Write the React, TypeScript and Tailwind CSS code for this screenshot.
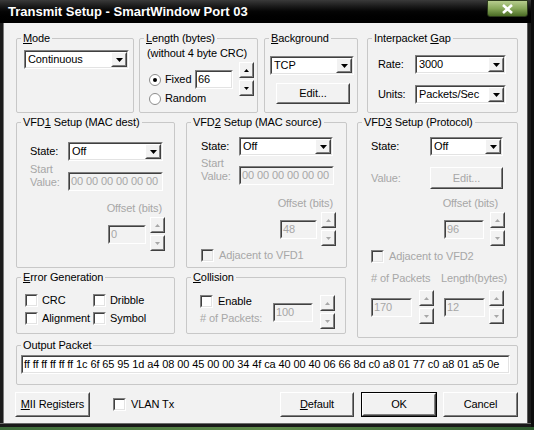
import React from "react";

const BG = "bg-[#f2f2f2]";
const sunkenO = "border border-t-[#808080] border-l-[#808080] border-b-white border-r-white";
const sunkenI = "border border-t-[#404040] border-l-[#404040] border-b-[#e3e3e3] border-r-[#e3e3e3]";
const raisedO = "border border-t-white border-l-white border-b-[#404040] border-r-[#404040]";
const raisedI = "border border-t-[#f2f2f2] border-l-[#f2f2f2] border-b-[#808080] border-r-[#808080]";
const dim = "text-[#a7a7a7]";

function Tri({ up, disabled, small }: { up?: boolean; disabled?: boolean; small?: boolean }) {
  const w = small ? 5 : 7;
  const h = small ? 3 : 4;
  const d = up ? `M0 ${h}H${w}L${w / 2} 0z` : `M0 0H${w}L${w / 2} ${h}z`;
  return (
    <svg width={w} height={h} viewBox={`0 0 ${w} ${h}`}>
      <path d={d} fill={disabled ? "#a7a7a7" : "#000"} />
    </svg>
  );
}

function Raised({ className, children, inner = "" }: { className: string; children?: React.ReactNode; inner?: string }) {
  return (
    <div className={`${raisedO} ${BG} ${className}`}>
      <div className={`${raisedI} w-full h-full flex items-center justify-center ${inner}`}>{children}</div>
    </div>
  );
}

function Combo({ value, className }: { value: string; className: string }) {
  return (
    <div className={`${sunkenO} bg-white ${className}`}>
      <div className={`${sunkenI} h-full flex items-center`}>
        <span className="flex-1 pl-[2px] whitespace-nowrap overflow-hidden">{value}</span>
        <Raised className="w-[16px] h-full">
          <Tri />
        </Raised>
      </div>
    </div>
  );
}

function Field({ value, className, disabled }: { value: string; className: string; disabled?: boolean }) {
  return (
    <div className={`${sunkenO} ${disabled ? BG : "bg-white"} ${className}`}>
      <div
        className={`${sunkenI} h-full flex items-center pl-[1px] whitespace-nowrap overflow-hidden ${disabled ? dim + " border-b-[#f2f2f2] border-r-[#f2f2f2]" : ""}`}
      >
        {value}
      </div>
    </div>
  );
}

function Spin({ disabled }: { disabled?: boolean }) {
  return (
    <div className="flex flex-col gap-[2px] w-[15px]">
      <Raised className="h-[16px]">
        <Tri up small disabled={disabled} />
      </Raised>
      <Raised className="h-[16px]">
        <Tri small disabled={disabled} />
      </Raised>
    </div>
  );
}

function Radio({ checked }: { checked?: boolean }) {
  return (
    <div className="w-[12px] h-[12px] rounded-full border border-[#8c8c8c] bg-white flex items-center justify-center">
      {checked && <div className="w-[4px] h-[4px] rounded-full bg-black" />}
    </div>
  );
}

function Check({ disabled }: { disabled?: boolean }) {
  return (
    <div className={`w-[13px] h-[13px] shrink-0 ${sunkenO} ${disabled ? BG : "bg-white"}`}>
      <div className={`w-full h-full ${sunkenI}`} />
    </div>
  );
}

function Group({ label, className, children }: { label: React.ReactNode; className: string; children?: React.ReactNode }) {
  return (
    <div className={`relative border border-[#c8c8c8] rounded-[2px] ${className}`}>
      <span className={`absolute left-[4px] top-[-8px] px-[2px] leading-[14px] whitespace-nowrap ${BG}`}>{label}</span>
      {children}
    </div>
  );
}

export default function App() {
  return (
    <div className="w-[534px] h-[430px] bg-[#0d0d0d] flex flex-col overflow-hidden font-['Liberation_Sans',Arial,sans-serif] text-[11px] tracking-[-0.1px] text-black">
      <div className="w-[531px] h-[427px] flex flex-col bg-[#161616]">
        {/* title bar */}
        <div className="h-[23px] flex items-start bg-gradient-to-b from-[#3a3a3a] via-[#050505] to-black">
          <span className="ml-[8px] mt-[4px] text-[13px] leading-[15px] font-bold tracking-normal text-white whitespace-nowrap">
            Transmit Setup - SmartWindow Port 03
          </span>
          <div className="ml-auto mr-[3px] w-[41px] h-[17px] rounded-b-[3px] border border-[#2c3a1c] bg-gradient-to-b from-[#b7cd8e] via-[#88a85a] to-[#4b6c25] flex items-center justify-center">
            <svg width="13" height="10" viewBox="0 0 13 10">
              <path d="M2 1l9 8M11 1L2 9" stroke="#fff" strokeWidth="2.6" />
            </svg>
          </div>
        </div>

        <div className="flex flex-1 min-h-0">
          <div className="w-[4px] bg-[#1c1c1c] border-r border-[#7a7a7a]" />
          <div className={`w-[523px] ${BG} flex flex-col pt-[15px] pl-[12px]`}>
            {/* row 1 */}
            <div className="flex h-[75px]">
              <Group label={<><u>M</u>ode</>} className="w-[118px] pt-[11px] pl-[7px]">
                <Combo value="Continuous" className="w-[105px] h-[19px]" />
              </Group>
              <Group label={<><u>L</u>ength (bytes)</>} className="ml-[5px] w-[119px] pt-[8px] pl-[7px]">
                <div className="leading-[13px] whitespace-nowrap">(without 4 byte CRC)</div>
                <div className="flex ml-[2px] mt-[2px]">
                  <div className="flex flex-col">
                    <div className="flex items-center h-[19px] mt-[8px]">
                      <Radio checked />
                      <span className="ml-[4px] w-[30px]">Fixed</span>
                      <Field value="66" className="w-[38px] h-[19px]" />
                    </div>
                    <div className="flex items-center h-[13px] mt-[3px]">
                      <Radio />
                      <span className="ml-[4px]">Random</span>
                    </div>
                  </div>
                  <div className="ml-[6px]">
                    <Spin />
                  </div>
                </div>
              </Group>
              <Group label={<><u>B</u>ackground</>} className="ml-[6px] w-[94px] pt-[17px] pl-[5px]">
                <Combo value="TCP" className="w-[84px] h-[19px]" />
                <Raised className="mt-[8px] ml-[6px] w-[74px] h-[21px]">Edit...</Raised>
              </Group>
              <Group label={<>Interpacket <u>G</u>ap</>} className="ml-[9px] w-[151px] pt-[16px] pl-[10px]">
                <div className="flex items-center">
                  <span className="w-[37px]">Rate:</span>
                  <Combo value="3000" className="w-[91px] h-[19px]" />
                </div>
                <div className="flex items-center mt-[11px]">
                  <span className="w-[37px]">Units:</span>
                  <Combo value="Packets/Sec" className="w-[91px] h-[19px]" />
                </div>
              </Group>
            </div>

            {/* row 2 */}
            <div className="flex mt-[9px]">
              <div className="flex flex-col">
                <div className="flex">
                  <Group label={<>VFD<u>1</u> Setup (MAC dest)</>} className="w-[159px] h-[146px] pt-[19px] pl-[13px]">
                    <div className="flex items-center">
                      <span className="w-[38px]">State:</span>
                      <Combo value="Off" className="w-[95px] h-[19px]" />
                    </div>
                    <div className="flex items-start mt-[2px]">
                      <span className={`w-[38px] leading-[13px] ${dim}`}>
                        Start
                        <br />
                        Value:
                      </span>
                      <Field disabled value="00 00 00 00 00 00" className="mt-[9px] w-[95px] h-[19px]" />
                    </div>
                    <div className={`mt-[11px] leading-[13px] text-right pr-[12px] ${dim}`}>Offset (bits)</div>
                    <div className="flex items-center justify-end mt-[2px] pr-[9px]">
                      <Field disabled value="0" className="w-[38px] h-[19px]" />
                      <div className="ml-[4px]">
                        <Spin disabled />
                      </div>
                    </div>
                  </Group>
                  <Group label={<>VFD<u>2</u> Setup (MAC source)</>} className="ml-[11px] w-[161px] h-[146px] pt-[14px] pl-[14px]">
                    <div className="flex items-center">
                      <span className="w-[38px]">State:</span>
                      <Combo value="Off" className="w-[94px] h-[19px]" />
                    </div>
                    <div className="flex items-start mt-[1px]">
                      <span className={`w-[38px] leading-[13px] ${dim}`}>
                        Start
                        <br />
                        Value:
                      </span>
                      <Field disabled value="00 00 00 00 00 00" className="mt-[9px] w-[95px] h-[19px]" />
                    </div>
                    <div className={`mt-[12px] leading-[13px] text-right pr-[13px] ${dim}`}>Offset (bits)</div>
                    <div className="flex items-center justify-end mt-[2px] pr-[10px]">
                      <Field disabled value="48" className="w-[37px] h-[19px]" />
                      <div className="ml-[4px]">
                        <Spin disabled />
                      </div>
                    </div>
                    <div className="flex items-center mt-[3px] h-[13px]">
                      <Check disabled />
                      <span className={`ml-[5px] ${dim}`}>Adjacent to VFD1</span>
                    </div>
                  </Group>
                </div>
                <div className="flex mt-[9px]">
                  <Group label={<><u>E</u>rror Generation</>} className="w-[159px] h-[57px] pt-[16px] pl-[8px]">
                    <div className="grid grid-cols-[68px_68px] gap-y-[5px]">
                      {["CRC", "Dribble", "Alignment", "Symbol"].map((t) => (
                        <div key={t} className="flex items-center h-[13px]">
                          <Check />
                          <span className="ml-[4px]">{t}</span>
                        </div>
                      ))}
                    </div>
                  </Group>
                  <Group label={<><u>C</u>ollision</>} className="ml-[11px] w-[160px] h-[57px] pt-[17px] pl-[13px]">
                    <div className="flex items-start">
                      <div className="flex flex-col w-[73px]">
                        <div className="flex items-center h-[13px]">
                          <Check />
                          <span className="ml-[5px]">Enable</span>
                        </div>
                        <span className={`mt-[4px] leading-[13px] whitespace-nowrap ${dim}`}># of Packets:</span>
                      </div>
                      <Field disabled value="100" className="mt-[8px] w-[40px] h-[19px]" />
                      <div className="ml-[7px]">
                        <Spin disabled />
                      </div>
                    </div>
                  </Group>
                </div>
              </div>
              <Group label={<>VFD<u>3</u> Setup (Protocol)</>} className="ml-[10px] w-[161px] h-[216px] pt-[14px] pl-[13px]">
                <div className="flex items-center">
                  <span className="w-[59px]">State:</span>
                  <Combo value="Off" className="w-[73px] h-[19px]" />
                </div>
                <div className="flex items-center mt-[11px]">
                  <span className={`w-[59px] ${dim}`}>Value:</span>
                  <Raised className="w-[73px] h-[22px]" inner={dim}>
                    Edit...
                  </Raised>
                </div>
                <div className={`mt-[8px] leading-[13px] text-right pr-[19px] ${dim}`}>Offset (bits)</div>
                <div className="flex items-center justify-end mt-[2px] pr-[12px]">
                  <Field disabled value="96" className="w-[40px] h-[19px]" />
                  <div className="ml-[6px]">
                    <Spin disabled />
                  </div>
                </div>
                <div className="flex items-center mt-[4px] h-[13px]">
                  <Check disabled />
                  <span className={`ml-[5px] ${dim}`}>Adjacent to VFD2</span>
                </div>
                <div className={`flex mt-[9px] leading-[13px] ${dim}`}>
                  <span className="w-[70px]"># of Packets</span>
                  <span>Length(bytes)</span>
                </div>
                <div className="flex items-center mt-[5px]">
                  <Field disabled value="170" className="w-[41px] h-[19px]" />
                  <div className="ml-[7px]">
                    <Spin disabled />
                  </div>
                  <Field disabled value="12" className="ml-[10px] w-[41px] h-[19px]" />
                  <div className="ml-[4px]">
                    <Spin disabled />
                  </div>
                </div>
              </Group>
            </div>

            {/* output packet */}
            <Group label="Output Packet" className="mt-[7px] w-[502px] h-[40px] pt-[9px] pl-[4px]">
              <Field
                value="ff ff ff ff ff ff 1c 6f 65 95 1d a4 08 00 45 00 00 34 4f ca 40 00 40 06 66 8d c0 a8 01 77 c0 a8 01 a5 0e"
                className="w-[489px] h-[19px]"
              />
            </Group>

            {/* buttons */}
            <div className="flex items-center mt-[7px] h-[25px] -ml-[1px] pr-[9px]">
              <Raised className="w-[75px] h-[25px]">
                <span>
                  <u>M</u>II Registers
                </span>
              </Raised>
              <div className="ml-[23px]">
                <Check />
              </div>
              <span className="ml-[5px]">VLAN Tx</span>
              <Raised className="ml-auto w-[74px] h-[25px]">
                <span>
                  <u>D</u>efault
                </span>
              </Raised>
              <div className="ml-[7px] border border-black">
                <Raised className="w-[74px] h-[23px]">OK</Raised>
              </div>
              <Raised className="ml-[6px] w-[75px] h-[25px]">Cancel</Raised>
            </div>
          </div>
          <div className="w-[4px] bg-[#1c1c1c] border-l border-[#5a5a5a]" />
        </div>
        <div className="h-[4px] bg-[#1a1a1a] border-t border-[#6a6a6a]" />
      </div>
      <div className="h-[3px] w-full bg-gradient-to-r from-[#3d6b3a] via-[#5f8a4a] to-[#2e5a2f]" />
    </div>
  );
}
